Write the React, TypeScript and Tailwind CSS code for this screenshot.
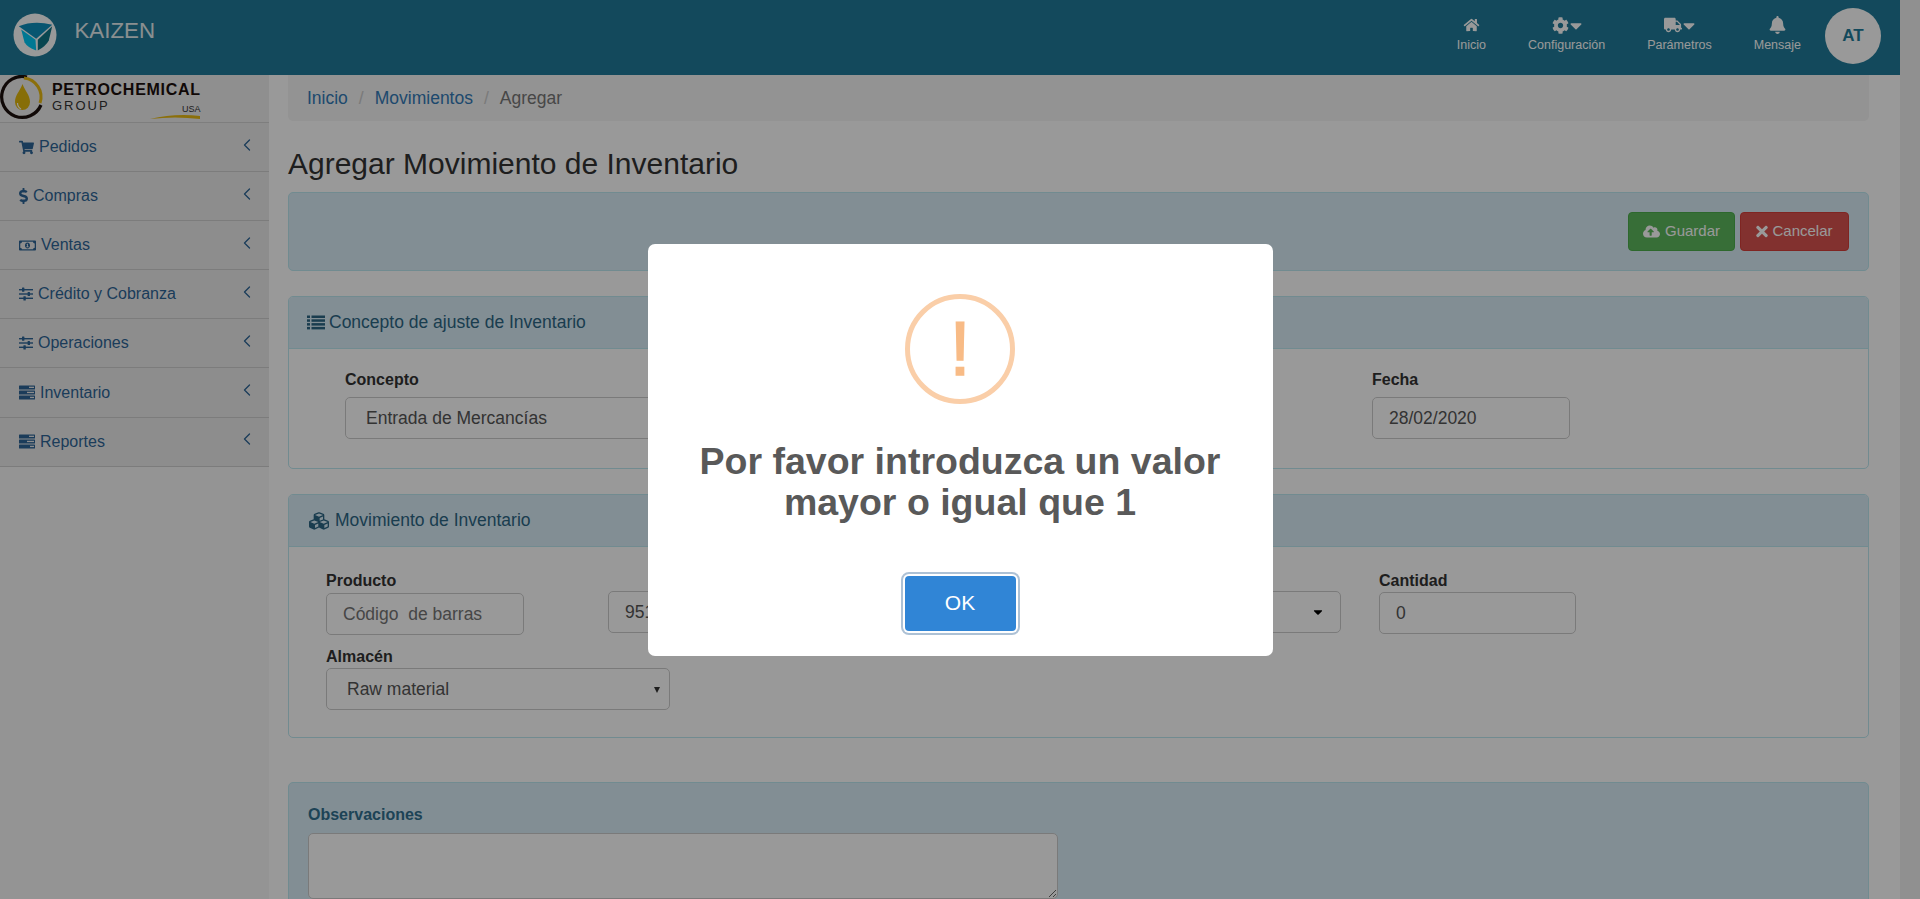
import React from 'react';
import {
  FaBell,
  FaCaretDown,
  FaCloudUploadAlt,
  FaCog,
  FaCubes,
  FaDollarSign,
  FaHome,
  FaRegMoneyBillAlt,
  FaShoppingCart,
  FaTimes,
  FaTruck,
} from 'react-icons/fa';
import { ChevronLeft } from 'lucide-react';

const SlidersIcon = () => (
  <svg width="14" height="14" viewBox="0 0 14 14" fill="currentColor" className="shrink-0">
    <rect x="0" y="2" width="14" height="1.4" />
    <rect x="3" y="0.6" width="2.4" height="4.2" rx="0.5" />
    <rect x="0" y="6.3" width="14" height="1.4" />
    <rect x="8.6" y="4.9" width="2.4" height="4.2" rx="0.5" />
    <rect x="0" y="10.6" width="14" height="1.4" />
    <rect x="4.4" y="9.2" width="2.4" height="4.2" rx="0.5" />
  </svg>
);

const TasksIcon = () => (
  <svg width="16" height="15" viewBox="0 0 16 15" fill="currentColor" className="shrink-0">
    <rect x="0" y="0.5" width="16" height="4" rx="0.5" />
    <rect x="0" y="5.5" width="16" height="4" rx="0.5" />
    <rect x="0" y="10.5" width="16" height="4" rx="0.5" />
    <rect x="10" y="1.7" width="5" height="1.3" fill="#ececec" />
    <rect x="8" y="6.8" width="7" height="1.3" fill="#ececec" />
    <rect x="11" y="11.8" width="4" height="1.3" fill="#ececec" />
  </svg>
);

const ListIcon = () => (
  <svg width="18" height="15" viewBox="0 0 18 15" fill="currentColor" className="shrink-0">
    <rect x="0" y="0.5" width="3" height="2.5" />
    <rect x="4.5" y="0.5" width="13.5" height="2.5" />
    <rect x="0" y="4.3" width="3" height="2.5" />
    <rect x="4.5" y="4.3" width="13.5" height="2.5" />
    <rect x="0" y="8.1" width="3" height="2.5" />
    <rect x="4.5" y="8.1" width="13.5" height="2.5" />
    <rect x="0" y="11.9" width="3" height="2.5" />
    <rect x="4.5" y="11.9" width="13.5" height="2.5" />
  </svg>
);

const MENU = [
  { label: 'Pedidos', icon: <FaShoppingCart className="w-[15px] h-[15px]" /> },
  { label: 'Compras', icon: <FaDollarSign className="w-[9px] h-[16px]" /> },
  { label: 'Ventas', icon: <FaRegMoneyBillAlt className="w-[17px] h-[15px]" /> },
  { label: 'Crédito y Cobranza', icon: <SlidersIcon /> },
  { label: 'Operaciones', icon: <SlidersIcon /> },
  { label: 'Inventario', icon: <TasksIcon /> },
  { label: 'Reportes', icon: <TasksIcon /> },
];

const NavItem = ({ icon, label, caret }: { icon: React.ReactNode; label: string; caret?: boolean }) => (
  <div className="flex flex-col items-center px-[21px] text-[#fff]">
    <div className="flex items-center h-[18px] mb-[2px]">
      {icon}
      {caret && <FaCaretDown className="ml-[1px] w-[12px] h-[19px]" />}
    </div>
    <span className="text-[12.5px] leading-[18px]">{label}</span>
  </div>
);

const KaizenLogo = () => (
  <svg width="44" height="44" viewBox="0 0 44 44" className="shrink-0">
    <circle cx="22" cy="22" r="21.5" fill="#ffffff" />
    <path d="M5.8 13.2 Q21 7 39.2 11.8 L23.2 25.8 Z" fill="#0e8ebb" />
    <path d="M8.2 16.5 L22.5 26.8 L23.2 37.5 Q14 34 11.5 29.2 Z" fill="#00c8f5" />
    <path d="M39.2 13.2 L24.8 26.8 L24.8 37.5 Q33 33 35.8 27.5 Z" fill="#107585" />
  </svg>
);

const PetroLogo = () => (
  <svg width="210" height="47" viewBox="0 0 210 47" className="block">
    <path d="M27 2 A20.5 20.5 0 1 0 41 30" fill="none" stroke="#1c0f0d" strokeWidth="3.2" />
    <path d="M24 3 A19 19 0 0 1 40 28" fill="none" stroke="#e8ba12" strokeWidth="3" />
    <path d="M22.5 9 C25 16 30 20 30 27 A7.5 8 0 0 1 15 27 C15 20 20 16 22.5 9 Z" fill="#e2b70c" />
    <path d="M17.5 28 Q17.5 32 21 34" fill="none" stroke="#ffffff" strokeWidth="1.2" />
    <text x="52" y="19.5" fontFamily="Liberation Sans, sans-serif" fontWeight="700" fontSize="16" letterSpacing="0.7" fill="#1c0f0d">
      PETROCHEMICAL
    </text>
    <text x="52" y="34.5" fontFamily="Liberation Sans, sans-serif" fontSize="13" letterSpacing="2" fill="#333333">
      GROUP
    </text>
    <text x="182" y="37" fontFamily="Liberation Sans, sans-serif" fontSize="9" fill="#333333">
      USA
    </text>
    <path d="M150 44 Q175 38 200 41 L200 44 Q175 41 150 44 Z" fill="#e8ba12" />
  </svg>
);

const Panel = ({ icon, title, children }: { icon: React.ReactNode; title: string; children: React.ReactNode }) => (
  <section className="border border-[#bce8f1] rounded-[5px] overflow-hidden bg-white mb-[25px]">
    <header className="h-[52px] bg-[#d9edf7] border-b border-[#bce8f1] flex items-center gap-[4px] pl-[18px] text-[17.5px] text-[#2c6684]">
      {icon}
      <span>{title}</span>
    </header>
    {children}
  </section>
);

const inputCls =
  'block h-[42px] border border-[#ccc] rounded-[5px] bg-white px-4 text-[17.5px] text-[#555] outline-none';

const labelCls = 'block pt-[1px] text-[16px] leading-[20px] font-bold';

const NativeSelect = ({ value, className }: { value: string; className: string }) => (
  <div className={`relative ${className}`}>
    <select className={`${inputCls} w-full appearance-none pl-[20px]`} defaultValue={value}>
      <option>{value}</option>
    </select>
    <span className="absolute right-[10px] top-[19px] w-0 h-0 border-x-[3.5px] border-x-transparent border-t-[6px] border-t-[#333]" />
  </div>
);

export default function App() {
  return (
    <div className="relative flex h-[899px] overflow-hidden bg-white font-['Liberation_Sans',Arial,sans-serif] text-[#333]">
      <div className="w-[1900px] flex flex-col">
        <nav className="h-[75px] bg-[#207b99] flex items-start shrink-0">
          <div className="flex items-center pl-[12.5px] pt-[12.5px]">
            <KaizenLogo />
            <span className="ml-[18px] mb-[7px] text-[22.3px] text-[#e6eef1]">KAIZEN</span>
          </div>
          <div className="ml-auto flex items-start pt-[16px] pr-[19px]">
            <NavItem icon={<FaHome className="w-[17px] h-[14px]" />} label="Inicio" />
            <NavItem icon={<FaCog className="w-[17px] h-[17px]" />} label="Configuración" caret />
            <NavItem icon={<FaTruck className="w-[18px] h-[16px]" />} label="Parámetros" caret />
            <NavItem icon={<FaBell className="w-[17px] h-[18px]" />} label="Mensaje" />
            <div className="ml-[3px] -mt-[8px] w-[56px] h-[56px] rounded-full bg-white flex items-center justify-center text-[17px] font-bold text-[#207b99]">
              AT
            </div>
          </div>
        </nav>

        <div className="flex flex-1 min-h-0">
          <aside className="w-[269px] shrink-0 bg-[#f7f7f7]">
            <div className="h-[48px] bg-[#eeeeee] border-b border-[#d2d2d2]">
              <PetroLogo />
            </div>
            {MENU.map((item) => (
              <div
                key={item.label}
                className="h-[49.1px] bg-[#ececec] border-b border-[#cfcfcf] flex items-center gap-[5px] pl-[19px] pr-[12px] text-[16px] text-[#2e6596]"
              >
                {item.icon}
                <span>{item.label}</span>
                <ChevronLeft size={20} strokeWidth={1.6} className="ml-auto mb-[5px]" />
              </div>
            ))}
          </aside>

          <main className="flex-1 min-w-0 pl-[19px] pr-[31px]">
            <div className="h-[46px] bg-[#f5f5f5] rounded-b-[5px] flex items-center px-[19px] text-[17.5px]">
              <span className="text-[#337ab7]">Inicio</span>
              <span className="px-[11px] text-[#ccc]">/</span>
              <span className="text-[#337ab7]">Movimientos</span>
              <span className="px-[11px] text-[#ccc]">/</span>
              <span className="text-[#777]">Agregar</span>
            </div>

            <h2 className="pt-[26px] pb-[11px] text-[30px] leading-[34px] font-normal">Agregar Movimiento de Inventario</h2>

            <div className="h-[79px] bg-[#d9edf7] border border-[#bce8f1] rounded-[5px] mb-[25px] flex items-center justify-end gap-[5px] pr-[19px]">
              <button className="h-[39px] w-[107px] flex items-center justify-center gap-[5px] rounded-[4px] bg-[#5cb85c] border border-[#4cae4c] text-[15px] text-white">
                <FaCloudUploadAlt className="w-[17px] h-[15px]" />
                Guardar
              </button>
              <button className="h-[39px] w-[109px] flex items-center justify-center gap-[4px] rounded-[4px] bg-[#d9534f] border border-[#d43f3a] text-[15px] text-white">
                <FaTimes className="w-[12px] h-[17px]" />
                Cancelar
              </button>
            </div>

            <Panel icon={<ListIcon />} title="Concepto de ajuste de Inventario">
              <div className="flex h-[119px] pt-[20px] pl-[56px]">
                <div className="w-[1027px]">
                  <label className={`${labelCls} mb-[7px]`}>Concepto</label>
                  <NativeSelect value="Entrada de Mercancías" className="w-[620px]" />
                </div>
                <div className="w-[198px]">
                  <label className={`${labelCls} mb-[7px]`}>Fecha</label>
                  <input readOnly value="28/02/2020" className={`${inputCls} w-full`} />
                </div>
              </div>
            </Panel>

            <Panel icon={<FaCubes className="w-[24px] h-[20px]" />} title="Movimiento de Inventario">
              <div className="h-[190px] pt-[23px] pl-[37px]">
                <div className="flex items-start">
                  <div className="w-[282px]">
                    <label className={`${labelCls} mb-[2px]`}>Producto</label>
                    <input readOnly placeholder="Código  de barras" className={`${inputCls} w-[198px] placeholder:text-[#757575]`} />
                  </div>
                  <div className={`${inputCls} mt-[21px] w-[733px] flex items-center justify-between text-[#333]`}>
                    <span>951</span>
                    <FaCaretDown className="w-[12px] h-[14px] text-black" />
                  </div>
                  <div className="ml-[38px] w-[197px]">
                    <label className={`${labelCls} mb-[1px]`}>Cantidad</label>
                    <input readOnly value="0" className={`${inputCls} w-full`} />
                  </div>
                </div>
                <label className={`${labelCls} mt-[11px] mb-[1px]`}>Almacén</label>
                <NativeSelect value="Raw material" className="w-[344px]" />
              </div>
            </Panel>

            <div className="mt-[44px] h-[200px] bg-[#d9edf7] border border-[#bce8f1] rounded-[5px] pt-[22px] pl-[19px]">
              <label className="block text-[16px] leading-[20px] font-bold text-[#31708f] mb-[8px]">Observaciones</label>
              <textarea className="block w-[750px] h-[66px] border border-[#ccc] rounded-[5px] bg-white outline-none" />
            </div>
          </main>
        </div>
      </div>
      <div className="w-[20px] bg-[#f1f1f1]" />

      <div className="fixed inset-0 bg-black/40 flex items-center justify-center">
        <div className="w-[625px] h-[412px] bg-white rounded-[7px] flex flex-col items-center pt-[50px]">
          <div className="w-[110px] h-[110px] rounded-full border-[5px] border-[#facea8] flex items-center justify-center text-[#f8bb86] text-[76px] leading-none [-webkit-text-stroke:1.5px_#f8bb86]">
            !
          </div>
          <h2 className="mt-[37px] text-[37.5px] leading-[41.6px] font-bold text-[#595959] text-center w-[580px]">
            Por favor introduzca un valor mayor o igual que 1
          </h2>
          <button className="mt-[52px] w-[111px] h-[55px] rounded-[4px] bg-[#3085d6] text-white text-[21px] shadow-[0_0_0_2px_#fff,0_0_0_4px_rgba(50,100,150,0.4)]">
            OK
          </button>
        </div>
      </div>
    </div>
  );
}
